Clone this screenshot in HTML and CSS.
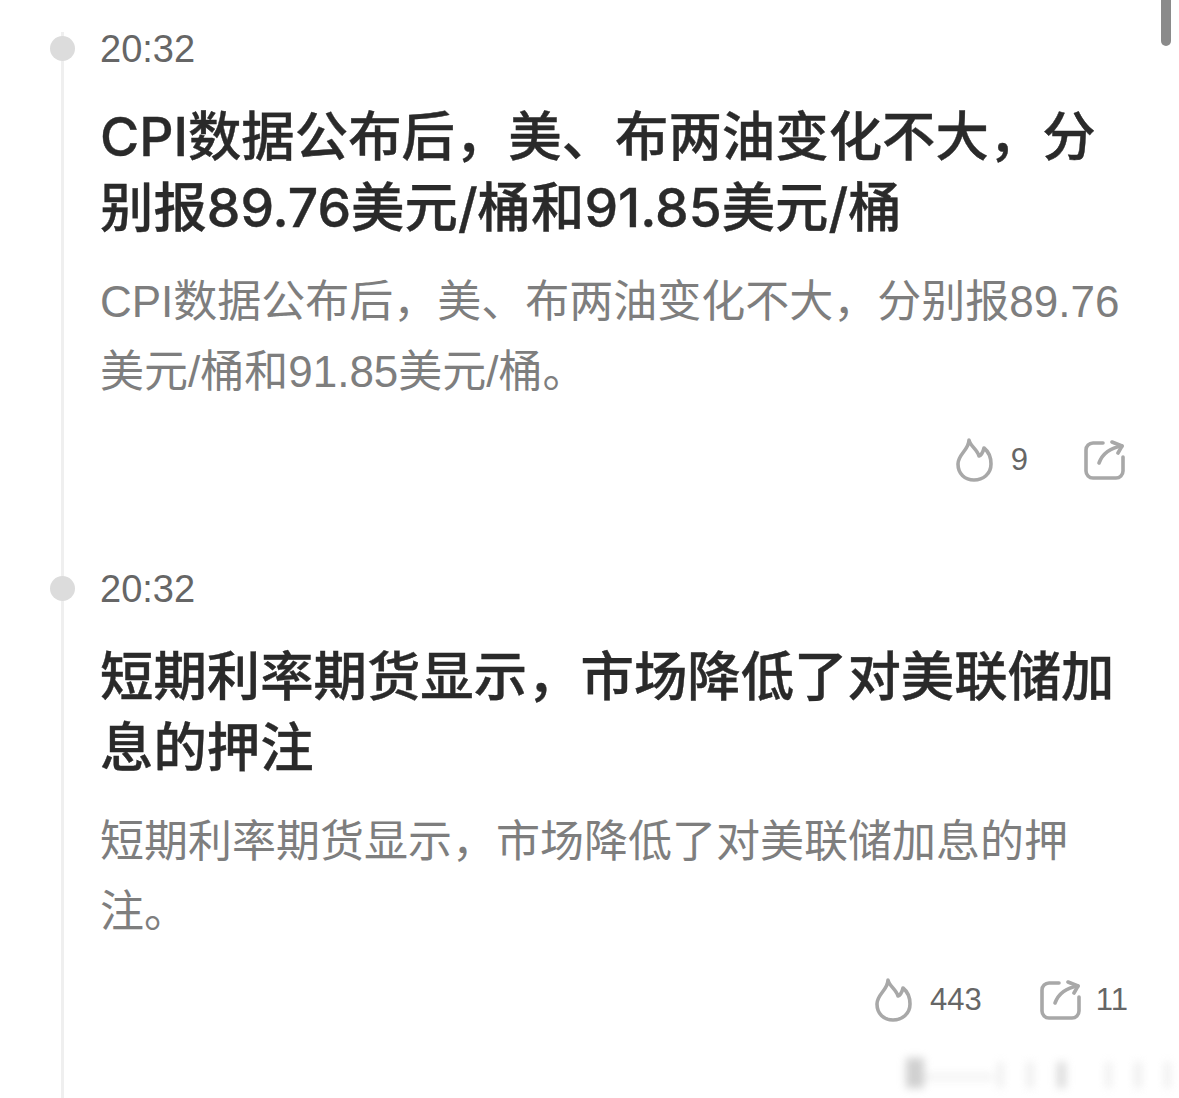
FILE: index.html
```html
<!DOCTYPE html>
<html lang="zh-CN">
<head>
<meta charset="utf-8">
<title>快讯</title>
<link rel="stylesheet" href="styles.css">
</head>
<body>
<main class="timeline">
  <article class="item">
    <div class="time"><span class="dot"></span>20:32</div>
    <h2 class="title">CPI数据公布后，美、布两油变化不大，分别报89.76美元/桶和91.85美元/桶</h2>
    <p class="summary">CPI数据公布后，美、布两油变化不大，分别报89.76美元/桶和91.85美元/桶。</p>
    <div class="actions">
      <span class="action">
        <svg class="icon" viewBox="0 0 39 46"><path d="M14 3c1 6 8 9 10 16 3-1 4-4 5-8 5 4 7 10 7 16 0 10-8 16-17 16S3 37 3 27C3 17 14 13 14 3z"/></svg>
        <span class="count">9</span>
      </span>
      <span class="action solo">
        <svg class="icon share" viewBox="0 0 42 40"><path d="M20 3H10a7 7 0 0 0-7 7v21a7 7 0 0 0 7 7h23a7 7 0 0 0 7-7V17"/><path d="M16 23c3-8 10-15 23-17"/><path d="M29 2l10 4-4 7"/></svg>
      </span>
    </div>
  </article>
  <article class="item">
    <div class="time"><span class="dot"></span>20:32</div>
    <h2 class="title">短期利率期货显示，市场降低了对美联储加息的押注</h2>
    <p class="summary">短期利率期货显示，市场降低了对美联储加息的押注。</p>
    <div class="actions">
      <span class="action">
        <svg class="icon" viewBox="0 0 39 46"><path d="M14 3c1 6 8 9 10 16 3-1 4-4 5-8 5 4 7 10 7 16 0 10-8 16-17 16S3 37 3 27C3 17 14 13 14 3z"/></svg>
        <span class="count">443</span>
      </span>
      <span class="action">
        <svg class="icon share" viewBox="0 0 42 40"><path d="M20 3H10a7 7 0 0 0-7 7v21a7 7 0 0 0 7 7h23a7 7 0 0 0 7-7V17"/><path d="M16 23c3-8 10-15 23-17"/><path d="M29 2l10 4-4 7"/></svg>
        <span class="count">11</span>
      </span>
    </div>
  </article>
</main>
<div class="scrollbar"></div>
<div class="watermark">
  <i class="mark big"></i><i class="mark band"></i><i class="mark"></i><i class="mark"></i><i class="mark strong"></i><i class="mark gap"></i><i class="mark"></i><i class="mark"></i>
</div>
</body>
</html>
```
FILE: styles.css
```css
* { box-sizing: border-box; }
html, body { margin: 0; height: 100%; }
body {
  width: 1179px;
  height: 1098px;
  overflow: hidden;
  background: #fff;
  font-family: "Liberation Sans", "Noto Sans CJK SC", sans-serif;
  position: relative;
}
.timeline {
  position: relative;
  margin-left: 64px;
  padding: 25px 51px 0 36px;
  height: 1098px;
}
.timeline::before {
  content: "";
  position: absolute;
  left: -3px;
  top: 32px;
  bottom: 0;
  width: 3px;
  background: #efefef;
}
.item { height: 540px; }
.time {
  position: relative;
  font-size: 38px;
  line-height: 48px;
  color: #666;
}
.dot {
  position: absolute;
  left: -50px;
  top: 11px;
  width: 25px;
  height: 25px;
  border-radius: 50%;
  background: #dcdcdc;
}
.title {
  margin: 28px 0 0;
  font-family: Inter, "Noto Sans CJK SC", sans-serif;
  font-size: 53.4px;
  line-height: 71px;
  font-weight: 500;
  color: #2a2a2a;
  -webkit-text-stroke: .4px #2a2a2a;
}
.summary {
  margin: 24px 0 0;
  font-size: 44px;
  line-height: 70px;
  color: #7e7e7e;
}
.actions {
  display: flex;
  justify-content: flex-end;
  gap: 57px;
  margin-top: 30px;
}
.action { display: flex; align-items: center; gap: 17px; }
.action.solo { margin-right: 5px; margin-left: -2px; }
.icon {
  width: 39px;
  height: 46px;
  fill: none;
  stroke: #a8a8a8;
  stroke-width: 3.6;
  stroke-linecap: round;
  stroke-linejoin: round;
}
.icon.share { width: 42px; height: 40px; margin-right: -2px; }
.count { font-size: 31px; color: #666; }
.scrollbar {
  position: absolute;
  top: 0;
  left: 1161px;
  width: 10px;
  height: 46px;
  border-radius: 0 0 5px 5px;
  background: #8a8a8a;
}
.watermark {
  position: absolute;
  left: 906px;
  top: 1054px;
  width: 264px;
  height: 34px;
  display: flex;
  align-items: flex-end;
  gap: 24px;
  filter: blur(4px);
  opacity: .6;
}
.mark { width: 6px; height: 26px; background: #dcdcdc; }
.mark.big { width: 20px; height: 30px; background: #b0b0b0; }
.mark.band { width: 78px; height: 6px; margin: 0 -20px 8px -24px; background: #e8e8e8; }
.mark.strong { width: 10px; background: #c4c4c4; }
.mark.gap { margin-left: 16px; }
```
